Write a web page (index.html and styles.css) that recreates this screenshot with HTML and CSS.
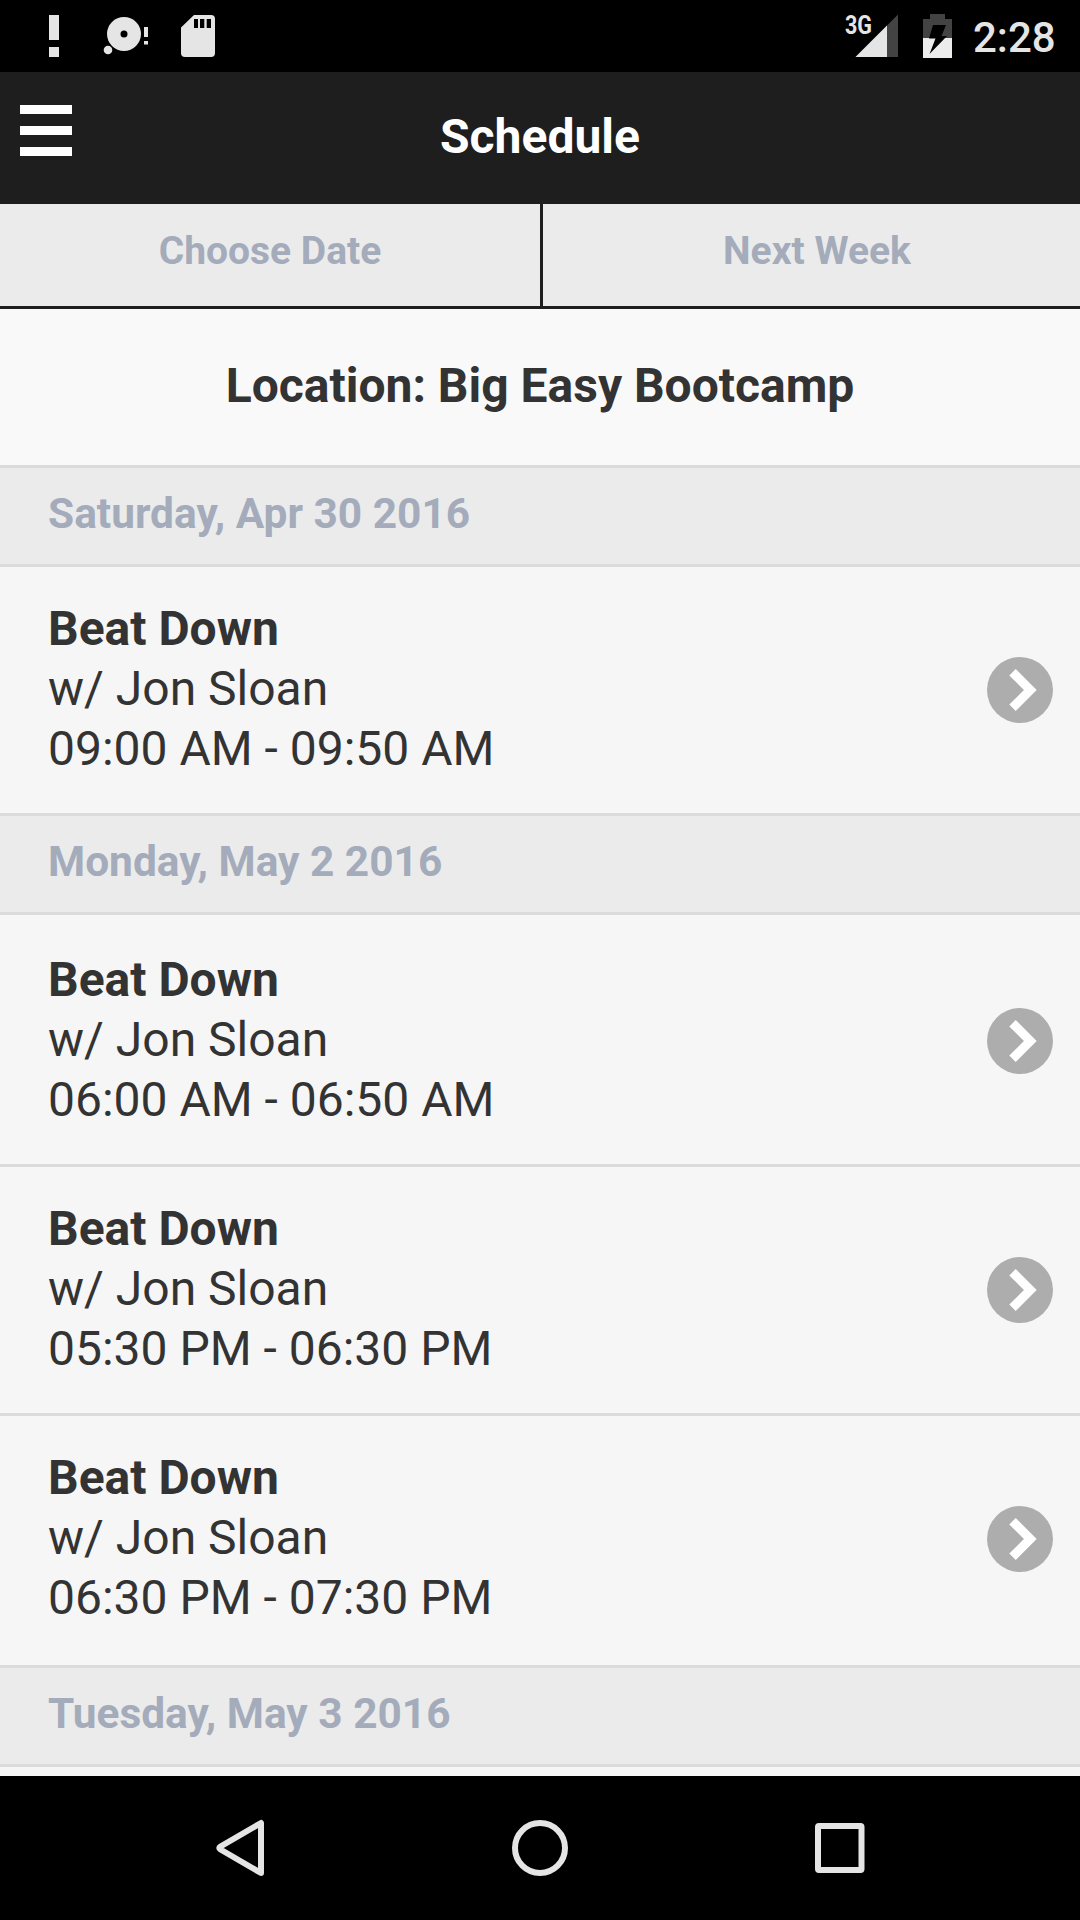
FILE: index.html
```html
<!DOCTYPE html>
<html lang="en">
<head>
<meta charset="utf-8">
<title>Schedule</title>
<link rel="stylesheet" href="styles.css">
</head>
<body>
<div class="screen">
  <div class="status">
    <svg class="status-left" width="240" height="72" viewBox="0 0 240 72" fill="#e5e5e5">
      <path d="M49 15h10v25H49zM49 47h10v10H49z"/>
      <circle cx="124" cy="34" r="17"/>
      <circle cx="124" cy="34" r="3.5" fill="#000"/>
      <circle cx="108" cy="50" r="4.3"/>
      <path d="M144 27h4v10h-4zM144 41h4v3.500h-4z"/>
      <path d="M194 15h17a4 4 0 0 1 4 4v34a4 4 0 0 1-4 4h-26a4 4 0 0 1-4-4V27.500z"/>
      <path d="M194 19h4v9h-4zM200 19h4.300v9H200zM206.700 19h4.300v9h-4.300z" fill="#000"/>
    </svg>
    <svg class="status-right" width="120" height="72" viewBox="840 0 120 72">
      <text class="net" x="845" y="33.500" textLength="27" lengthAdjust="spacingAndGlyphs">3G</text>
      <path d="M855.500 57L898 14.500V57z" fill="#434343"/>
      <path d="M855.500 57L887 25.500V57z" fill="#e5e5e5"/>
      <path d="M923 19h7v-5h15v5h7v19h-29z" fill="#434343"/>
      <path d="M923 38h29v20h-29z" fill="#ececec"/>
      <path d="M933 25h13l-4.500 11h5.500l-17.500 18 6-15.500h-6.500z"/>
    </svg>
    <span class="clock">2:28</span>
  </div>
  <header class="bar">
    <div class="menu"><i></i><i></i><i></i></div>
    <h1 class="title">Schedule</h1>
  </header>
  <div class="tabs">
    <div class="tab">Choose Date</div>
    <div class="tab">Next Week</div>
  </div>
  <main class="content">
    <h2 class="location">Location: Big Easy Bootcamp</h2>
    <h3 class="day">Saturday, Apr 30 2016</h3>
    <div class="item">
      <div class="info"><b>Beat Down</b><span>w/ Jon Sloan</span><span>09:00 AM - 09:50 AM</span></div>
      <svg class="go" viewBox="0 0 66 66"><circle cx="33" cy="33" r="33"/><path d="M25.500 15.200L43.300 33 25.500 50.800"/></svg>
    </div>
    <h3 class="day">Monday, May 2 2016</h3>
    <div class="item first-of-many">
      <div class="info"><b>Beat Down</b><span>w/ Jon Sloan</span><span>06:00 AM - 06:50 AM</span></div>
      <svg class="go" viewBox="0 0 66 66"><circle cx="33" cy="33" r="33"/><path d="M25.500 15.200L43.300 33 25.500 50.800"/></svg>
    </div>
    <div class="item">
      <div class="info"><b>Beat Down</b><span>w/ Jon Sloan</span><span>05:30 PM - 06:30 PM</span></div>
      <svg class="go" viewBox="0 0 66 66"><circle cx="33" cy="33" r="33"/><path d="M25.500 15.200L43.300 33 25.500 50.800"/></svg>
    </div>
    <div class="item last-of-many">
      <div class="info"><b>Beat Down</b><span>w/ Jon Sloan</span><span>06:30 PM - 07:30 PM</span></div>
      <svg class="go" viewBox="0 0 66 66"><circle cx="33" cy="33" r="33"/><path d="M25.500 15.200L43.300 33 25.500 50.800"/></svg>
    </div>
    <h3 class="day">Tuesday, May 3 2016</h3>
  </main>
  <nav class="nav">
    <svg width="60" height="60" viewBox="0 0 60 60"><path d="M51 5v50L10.500 31.500q-2.500-1.500 0-3z"/></svg>
    <svg width="60" height="60" viewBox="0 0 60 60"><circle cx="30" cy="30" r="25"/></svg>
    <svg width="60" height="60" viewBox="0 0 60 60"><rect x="8" y="8" width="43.500" height="44" rx="1"/></svg>
  </nav>
</div>
</body>
</html>
```
FILE: styles.css
```css
* { box-sizing: border-box; margin: 0; padding: 0; }
body { font-family: Roboto, sans-serif; color: #333; background: #000; }
.screen { width: 1080px; height: 1920px; display: flex; flex-direction: column; overflow: hidden; }
svg { display: block; flex: none; }

.status { height: 72px; flex: none; background: #000; display: flex; }
.status-right { margin-left: auto; }
.net { font: 700 25px Roboto, sans-serif; fill: #e5e5e5; }
.clock { width: 120px; padding: 13px 0 0 13px; font-size: 42px; line-height: 50px; font-weight: 500; color: #e5e5e5; }

.bar { height: 132px; flex: none; background: #1e1e1e; display: grid; grid-template-columns: 140px 1fr 140px; }
.menu { padding: 33px 0 0 20px; display: flex; flex-direction: column; gap: 12px; }
.menu i { width: 52px; height: 9px; background: #fff; }
.title { color: #fff; font-size: 48px; line-height: 60px; text-align: center; padding-top: 35px; }

.tabs { height: 105px; flex: none; display: flex; background: #ebebeb; border-bottom: 3px solid #1e1e1e; }
.tab { flex: 1; text-align: center; font-size: 39px; font-weight: 700; line-height: 48px; padding: 23px 0 0 11px; color: #a4abba; }
.tab:first-child { flex: 0 0 543px; padding-left: 0; border-right: 3px solid #1e1e1e; }

.content { height: 1467px; flex: none; background: #f6f6f6; overflow: hidden; }
.location { height: 156px; background: #f9f9f9; text-align: center; font-size: 48px; line-height: 60px; padding-top: 47px; }
.day { height: 102px; background: #ebebeb; border: solid #dbdbdb; border-width: 3px 0; padding: 20px 48px 0; font-size: 42.45px; line-height: 52px; color: #a4abba; }
.item { height: 246px; padding: 32px 27px 34px 48px; display: flex; justify-content: space-between; }
.item + .item { border-top: 3px solid #dbdbdb; height: 249px; }
.item.first-of-many { height: 249px; padding-top: 35px; }
.item.last-of-many { height: 252px; }
.info { display: flex; flex-direction: column; font-size: 48px; line-height: 60px; }
.go { width: 66px; height: 66px; margin-top: 58px; fill: #adadad; }
.go path { fill: none; stroke: #fff; stroke-width: 9; }

.nav { height: 144px; flex: none; background: #000; display: flex; justify-content: center; align-items: center; gap: 240px; }
.nav svg { fill: none; stroke: #e5e5e5; stroke-width: 6; stroke-linejoin: round; }
```
